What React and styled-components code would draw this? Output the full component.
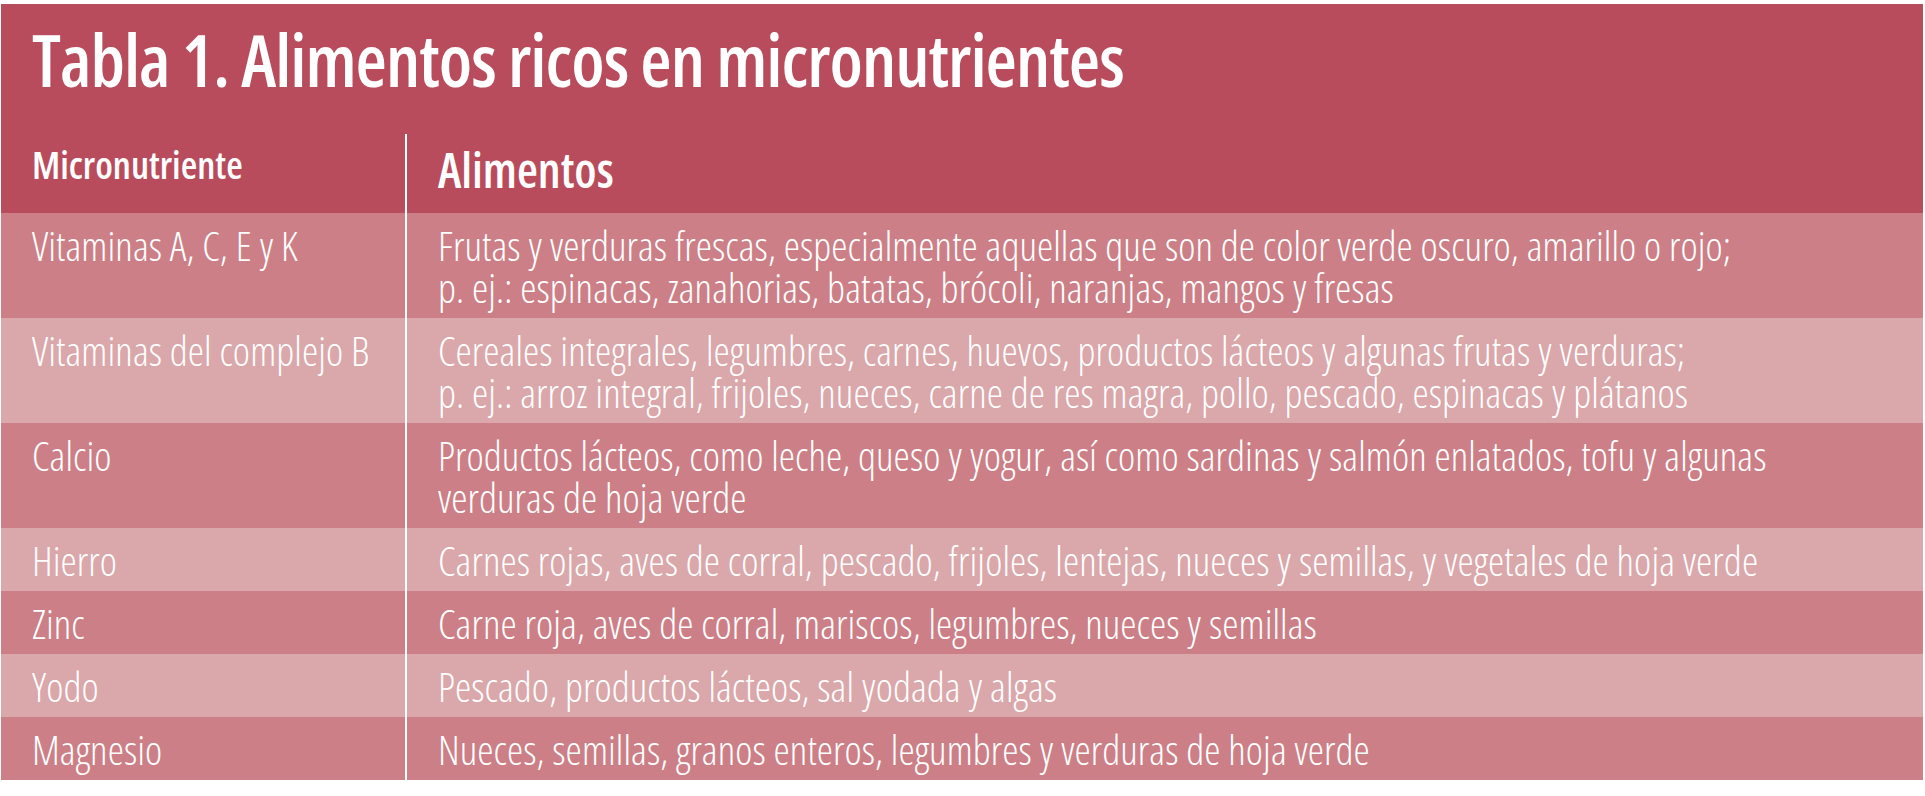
import React from 'react';
import styled, { createGlobalStyle } from 'styled-components';

const Global = createGlobalStyle`
  body {
    margin: 0;
    background: #fff;
    font-family: "Open Sans", "Liberation Sans", sans-serif;
    font-stretch: 75%;
  }
`;

const Table = styled.div`
  margin: 4px 2px 0 1px;
  width: 1922px;
  color: #fff;
`;

const Header = styled.div`
  background: #b94c5c;
`;

const Title = styled.h1`
  margin: 0;
  box-sizing: border-box;
  height: 130px;
  padding: 19px 0 0 31px;
  font-size: 72px;
  line-height: 72px;
  font-weight: 600;
  letter-spacing: -1px;
`;

const Row = styled.div`
  display: grid;
  grid-template-columns: 404px 1fr;
  background: ${p => p.$bg || 'transparent'};
`;

const HeadCell = styled.div`
  box-sizing: border-box;
  height: 79px;
  padding: ${p => p.$pt}px 0 0 31px;
  font-size: ${p => p.$size}px;
  line-height: 1;
  font-weight: 600;
  border-left: ${p => (p.$line ? '2px solid #fff' : 'none')};
`;

const Cell = styled.div`
  padding: 11px 0 10px 31px;
  font-size: 41px;
  line-height: 42px;
  font-weight: 300;
  letter-spacing: 0.08px;
  white-space: nowrap;
  border-left: ${p => (p.$line ? '2px solid #fff' : 'none')};
`;

const rows = [
  ['Vitaminas A, C, E y K', [
    'Frutas y verduras frescas, especialmente aquellas que son de color verde oscuro, amarillo o rojo;',
    'p. ej.: espinacas, zanahorias, batatas, brócoli, naranjas, mangos y fresas',
  ]],
  ['Vitaminas del complejo B', [
    'Cereales integrales, legumbres, carnes, huevos, productos lácteos y algunas frutas y verduras;',
    'p. ej.: arroz integral, frijoles, nueces, carne de res magra, pollo, pescado, espinacas y plátanos',
  ]],
  ['Calcio', [
    'Productos lácteos, como leche, queso y yogur, así como sardinas y salmón enlatados, tofu y algunas',
    'verduras de hoja verde',
  ]],
  ['Hierro', ['Carnes rojas, aves de corral, pescado, frijoles, lentejas, nueces y semillas, y vegetales de hoja verde']],
  ['Zinc', ['Carne roja, aves de corral, mariscos, legumbres, nueces y semillas']],
  ['Yodo', ['Pescado, productos lácteos, sal yodada y algas']],
  ['Magnesio', ['Nueces, semillas, granos enteros, legumbres y verduras de hoja verde']],
];

export default function App() {
  return (
    <>
      <Global />
      <Table>
        <Header>
          <Title>Tabla 1. Alimentos ricos en micronutrientes</Title>
          <Row>
            <HeadCell $size={38} $pt={11}>Micronutriente</HeadCell>
            <HeadCell $size={48} $pt={12} $line>Alimentos</HeadCell>
          </Row>
        </Header>
        {rows.map(([name, foods], i) => (
          <Row key={name} $bg={i % 2 === 0 ? '#cc7f86' : '#daa7aa'}>
            <Cell>{name}</Cell>
            <Cell $line>
              {foods.map((line, j) => (
                <div key={j}>{line}</div>
              ))}
            </Cell>
          </Row>
        ))}
      </Table>
    </>
  );
}
